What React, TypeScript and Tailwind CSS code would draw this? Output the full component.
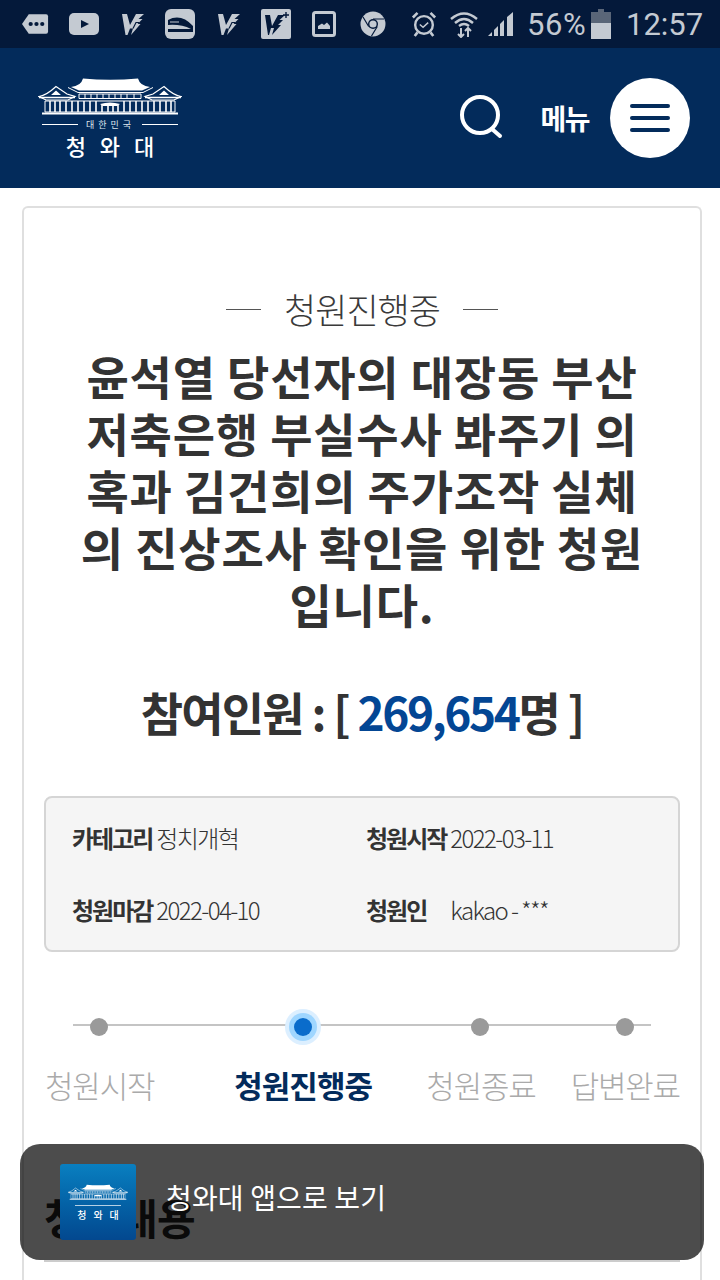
const font = "font-['Noto_Sans_CJK_KR','Noto_Sans',sans-serif]";

const Palace = ({ className }: { className: string }) => (
  <svg viewBox="0 0 144 38" className={className} fill="none">
    {/* main roof */}
    <path d="M33 10 Q43 9 45 1.5 Q72 4 100 1.5 Q102 9 112 10 L104 13.5 H41 Z" fill="#fff" />
    <path d="M30 10.5 L40 15.5 H105 L115 10.5" stroke="#fff" strokeWidth="1" />
    {/* side roofs */}
    <path d="M1 19.5 Q9 18 18 9.5 L29 17 L37 19.5 L30 23 H8 Z" fill="none" stroke="#fff" strokeWidth="1.2" />
    <path d="M143 19.5 Q135 18 126 9.5 L115 17 L107 19.5 L114 23 H136 Z" fill="none" stroke="#fff" strokeWidth="1.2" />
    <path d="M13 18 L18 13.5 L23 18 Z M121 18 L126 13.5 L131 18 Z" fill="#fff" />
    <path d="M1 20.5 H37 M107 20.5 H143" stroke="#fff" strokeWidth="1.6" />
    {/* upper lattice */}
    <path d="M41 17 H103 V21.5 H41 Z" fill="none" stroke="#fff" strokeWidth="1" />
    <path d="M47 17 V22 M53 17 V22 M59 17 V22 M65 17 V22 M71 17 V22 M77 17 V22 M83 17 V22 M89 17 V22 M96 17 V22" stroke="#fff" />
    {/* lower walls */}
    <path d="M7 24 H137 V35 H7 Z" fill="none" stroke="#fff" strokeWidth="1" />
    <path d="M12 24 V35 M17 24 V35 M22 24 V35 M28 24 V35 M34 24 V35 M40 24 V35 M46 24 V35 M52 24 V35 M58 24 V35 M64 28 V35 M70 29 V35 M75 29 V35 M80 28 V35 M86 24 V35 M92 24 V35 M98 24 V35 M104 24 V35 M110 24 V35 M116 24 V35 M122 24 V35 M128 24 V35 M133 24 V35" stroke="#fff" strokeWidth="1.6" />
    <path d="M62 27 Q72 24 82 27 L79 29 H65 Z" fill="#fff" />
    <path d="M4 36.5 H140" stroke="#fff" strokeWidth="2" />
  </svg>
);

const VIcon = () => (
  <svg viewBox="0 0 22 22" className="w-[22px] h-[22px]">
    <path d="M0 1 H5 L8 12 L14 1 H22 L16.5 6 H20.5 L15.5 11 H18.5 L9 22 L11 15.5 H8 L5.5 22 H3.5 Z" fill="#c4cad2" />
    <path d="M11 15.5 L14 9.5 H17" stroke="#04193a" strokeWidth="1.2" fill="none" />
  </svg>
);

const StatusBar = () => (
  <div className="h-[48px] bg-[#04193a] flex items-center pl-[22px] text-[#c4cad2]">
    <svg viewBox="0 0 28 22" className="w-[27px] h-[22px]" fill="#c4cad2">
      <path d="M7 1 H25 Q27 1 27 3 V19 Q27 21 25 21 H7 L0 11 Z" />
      <g fill="#04193a"><circle cx="9" cy="11" r="2.2" /><circle cx="15" cy="11" r="2.2" /><circle cx="21" cy="11" r="2.2" /></g>
    </svg>
    <svg viewBox="0 0 30 22" className="w-[30px] h-[22px] ml-[20px]">
      <rect x="0" y="0" width="30" height="22" rx="5" fill="#c4cad2" />
      <path d="M12 7 L20 11 L12 15 Z" fill="#04193a" />
    </svg>
    <div className="ml-[23px]"><VIcon /></div>
    <svg viewBox="0 0 30 30" className="w-[30px] h-[30px] ml-[21px]">
      <rect width="30" height="30" rx="6" fill="#c4cad2" />
      <path d="M3 11 Q16 4 28 17 V23 H3 V20 H26 Q16 15 3 16 Z" fill="#04193a" />
      <path d="M5 12.5 H14 V13.5 H5 Z" fill="#c4cad2" />
    </svg>
    <div className="ml-[23px]"><VIcon /></div>
    <svg viewBox="0 0 30 30" className="w-[30px] h-[30px] ml-[21px]">
      <rect width="30" height="30" rx="2" fill="#c4cad2" />
      <path d="M4 6 H9 L11 17 L17 6 H24 L18.5 11 H22 L17 16 H20 L11 26 L13 19 H10 L8 26 H7 Z" fill="#04193a" />
      <path d="M25 3 V9 M22 6 H28" stroke="#04193a" strokeWidth="1.4" />
    </svg>
    <svg viewBox="0 0 24 26" className="w-[24px] h-[26px] ml-[21px]" fill="none">
      <rect x="1.5" y="1.5" width="21" height="23" rx="2" stroke="#c4cad2" strokeWidth="3" />
      <path d="M6 18 L6 15 L10 12.5 L12 14 L15 11.5 L18 15 V18 Z" fill="#c4cad2" />
    </svg>
    <svg viewBox="0 0 26 26" className="w-[26px] h-[26px] ml-[24px]">
      <circle cx="13" cy="13" r="12.5" fill="#c4cad2" />
      <circle cx="13" cy="13" r="5" fill="#04193a" />
      <circle cx="13" cy="13" r="3.6" fill="#c4cad2" />
      <path d="M13 8 H24 M8.7 15.5 L3 6 M17.3 15.5 L11.5 25" stroke="#04193a" strokeWidth="1.2" />
    </svg>
    <svg viewBox="0 0 28 28" className="w-[26px] h-[28px] ml-[25px]" fill="none" stroke="#c4cad2" strokeWidth="2">
      <circle cx="14" cy="15" r="9.5" strokeWidth="2.6" />
      <path d="M9.5 14.5 L13 17.5 L18.5 12.5" strokeWidth="1.6" />
      <path d="M2 7 L7 2 M26 7 L21 2 M7 23 L4 27 M21 23 L24 27" strokeWidth="2.8" />
    </svg>
    <svg viewBox="0 0 28 28" className="w-[28px] h-[28px] ml-[13px]" fill="none" stroke="#c4cad2">
      <path d="M1 9 Q14 -2 27 9" strokeWidth="2.4" />
      <path d="M5 13 Q14 5 23 13" strokeWidth="2.4" />
      <path d="M9 16 Q14 12 19 16" strokeWidth="2.4" />
      <path d="M11 18 V27 M8 24 L11 27 L14 24 M18 27 V18 M15 21 L18 18 L21 21" strokeWidth="2" />
    </svg>
    <svg viewBox="0 0 28 26" className="w-[28px] h-[26px] ml-[9px]" fill="#c4cad2">
      <path d="M1 25 L5 21 V25 Z M7 19 L11 15 V25 H7 Z M13 13 L17 9 V25 H13 Z M20 6 L26 1 V25 H20 Z" />
    </svg>
    <span className="ml-[12px] w-[58px] text-[31px] leading-none font-['Roboto',sans-serif] tracking-[0.6px]">56%</span>
    <svg viewBox="0 0 20 30" className="w-[20px] h-[30px] ml-[6px]">
      <path d="M7 0 H13 V3 H20 V30 H0 V3 H7 Z" fill="#5a6678" />
      <rect y="14" width="20" height="16" fill="#c4cad2" />
    </svg>
    <span className="ml-[15px] text-[31px] leading-none font-['Roboto',sans-serif]">12:57</span>
  </div>
);

const Header = () => (
  <div className="h-[140px] bg-[#032b5b] flex items-center justify-between pl-[38px] pr-[30px]">
    <div className="flex flex-col items-center w-[144px] text-white -mt-[2px]">
      <Palace className="w-[144px] h-[38px]" />
      <div className="flex items-center gap-[7px] mt-[5px] w-[136px]">
        <div className="h-px flex-1 bg-white" />
        <span className="text-[9px] leading-[10px] tracking-[4px] ml-[1px] text-[#dfe6ee]">대한민국</span>
        <div className="h-px flex-1 bg-white" />
      </div>
      <span className="mt-[2px] text-[22px] leading-[26px] font-medium tracking-[14px] ml-[14px]">청와대</span>
    </div>
    <div className="flex items-center">
      <svg viewBox="0 0 44 46" className="w-[44px] h-[46px] mr-[37px]" fill="none" stroke="#fff" strokeWidth="4" strokeLinecap="round">
        <circle cx="21" cy="20" r="18" />
        <path d="M33 34 L41 41" />
      </svg>
      <span className="text-white text-[28px] leading-none font-bold mr-[21px] tracking-[-1.5px]">메뉴</span>
      <div className="w-[80px] h-[80px] rounded-full bg-white flex flex-col items-center justify-center gap-[8px]">
        <div className="w-[40px] h-[4px] rounded-full bg-[#032b5b]" />
        <div className="w-[40px] h-[4px] rounded-full bg-[#032b5b]" />
        <div className="w-[40px] h-[4px] rounded-full bg-[#032b5b]" />
      </div>
    </div>
  </div>
);

const InfoItem = ({ label, value, gap }: { label: string; value: string; gap?: boolean }) => (
  <div className="text-[24px] leading-[34px] text-[#333] tracking-[-1.6px] whitespace-nowrap">
    <span className="font-bold tracking-[-2px]">{label}</span>
    <span className={gap ? "ml-[24px] font-light" : "ml-[4px] font-light"}>{value}</span>
  </div>
);

const steps = [
  { label: "청원시작", x: "w-[110px]", on: false },
  { label: "청원진행중", x: "w-[137px]", on: true },
  { label: "청원종료", x: "w-[110px]", on: false },
  { label: "답변완료", x: "w-[110px]", on: false },
];

const Progress = () => (
  <div className="mt-[55px]">
    {/* dots on the line */}
    <div className="relative h-[40px] mx-[29px]">
      <div className="absolute left-0 right-0 top-[17px] h-[2px] bg-[#c4c4c4]" />
      <div className="relative flex pl-[17px]">
        <div className="w-[18px] h-[18px] mt-[11px] rounded-full bg-[#9a9a9a]" />
        <div className="w-[36px] h-[36px] mt-[2px] ml-[177px] rounded-full bg-[#dcefff] flex items-center justify-center">
          <div className="w-[28px] h-[28px] rounded-full bg-[#9fd6ff] flex items-center justify-center">
            <div className="w-[18px] h-[18px] rounded-full bg-[#0a6ccb]" />
          </div>
        </div>
        <div className="w-[18px] h-[18px] mt-[11px] ml-[150px] rounded-full bg-[#9a9a9a]" />
        <div className="w-[18px] h-[18px] mt-[11px] ml-[127px] rounded-full bg-[#9a9a9a]" />
      </div>
    </div>
    <div className="flex mt-[16px] pl-[1px] h-[44px]">
      {steps.map((s, i) => (
        <span
          key={s.label}
          className={
            (s.on
              ? "text-[#032b5b] font-bold tracking-[-1px]"
              : "text-[#aaa] font-light tracking-[-1.2px]") +
            " text-[31px] leading-[44px] whitespace-nowrap " +
            s.x +
            (i === 1 ? " ml-[80px]" : i === 2 ? " ml-[55px]" : i === 3 ? " ml-[35px]" : "")
          }
        >
          {s.label}
        </span>
      ))}
    </div>
  </div>
);

const AppIcon = () => (
  <div className="w-[76px] h-[76px] rounded-[3px] bg-gradient-to-b from-[#0a7fc0] to-[#03488f] flex flex-col items-center justify-center pt-[2px] text-white">
    <Palace className="w-[60px] h-[16px]" />
    <div className="w-[46px] h-px bg-white/70 mt-[5px]" />
    <span className="text-[10px] leading-[14px] font-medium tracking-[7px] ml-[7px] mt-[2px]">청와대</span>
  </div>
);

export default function App() {
  return (
    <div className={font + " relative w-[720px] h-[1280px] overflow-hidden bg-white"}>
      <StatusBar />
      <Header />
      <div className="mt-[18px] mx-[22px] w-[680px] border-2 border-b-0 border-[#dfdfdf] rounded-t-[6px] h-[1100px] px-[20px]">
        <div className="flex items-center justify-center gap-[23px] mt-[78px] text-[35px] leading-[46px] text-[#3a3a3a] font-light tracking-[-1px]">
          <div className="w-[35px] h-px bg-[#555]" />
          <span>청원진행중</span>
          <div className="w-[35px] h-px bg-[#555]" />
        </div>
        <h1 className="mx-auto mt-[15px] w-[570px] text-center text-[46px] leading-[57px] font-bold text-[#333] break-all tracking-[0.8px]">
          윤석열 당선자의 대장동 부산 저축은행 부실수사 봐주기 의혹과 김건희의 주가조작 실체의 진상조사 확인을 위한 청원입니다.
        </h1>
        <div className="mt-[47px] text-center text-[46px] leading-[64px] font-bold text-[#333] tracking-[-1.8px] whitespace-nowrap">
          참여인원 : [ <span className="text-[#034694] tracking-[-2.4px]">269,654</span>명 ]
        </div>
        <div className="mt-[53px] h-[156px] border-2 border-[#d5d5d5] rounded-[8px] bg-[#f5f5f5] grid grid-cols-[294px_1fr] grid-rows-[72px_72px] pl-[26px] pt-[4px] items-center">
          <InfoItem label="카테고리" value="정치개혁" />
          <InfoItem label="청원시작" value="2022-03-11" />
          <InfoItem label="청원마감" value="2022-04-10" />
          <InfoItem label="청원인" value="kakao - ***" gap />
        </div>
        <Progress />
        <div className="mt-[80px] text-[42px] leading-[60px] font-bold text-[#222] tracking-[-1px]">청원내용</div>
        <div className="mt-[13px] h-[2px] bg-[#ccc]" />
      </div>
      {/* app banner over the page, the heading shows through it */}
      <div className="absolute left-[20px] top-[1144px] w-[684px] h-[116px] rounded-[20px] bg-black/70 flex items-center pl-[40px] pr-[20px]">
        <div className="-mt-[1px]"><AppIcon /></div>
        <span className="ml-[30px] -mt-[10px] text-white text-[28px] leading-[40px] tracking-[0.15px]">청와대 앱으로 보기</span>
      </div>
    </div>
  );
}
